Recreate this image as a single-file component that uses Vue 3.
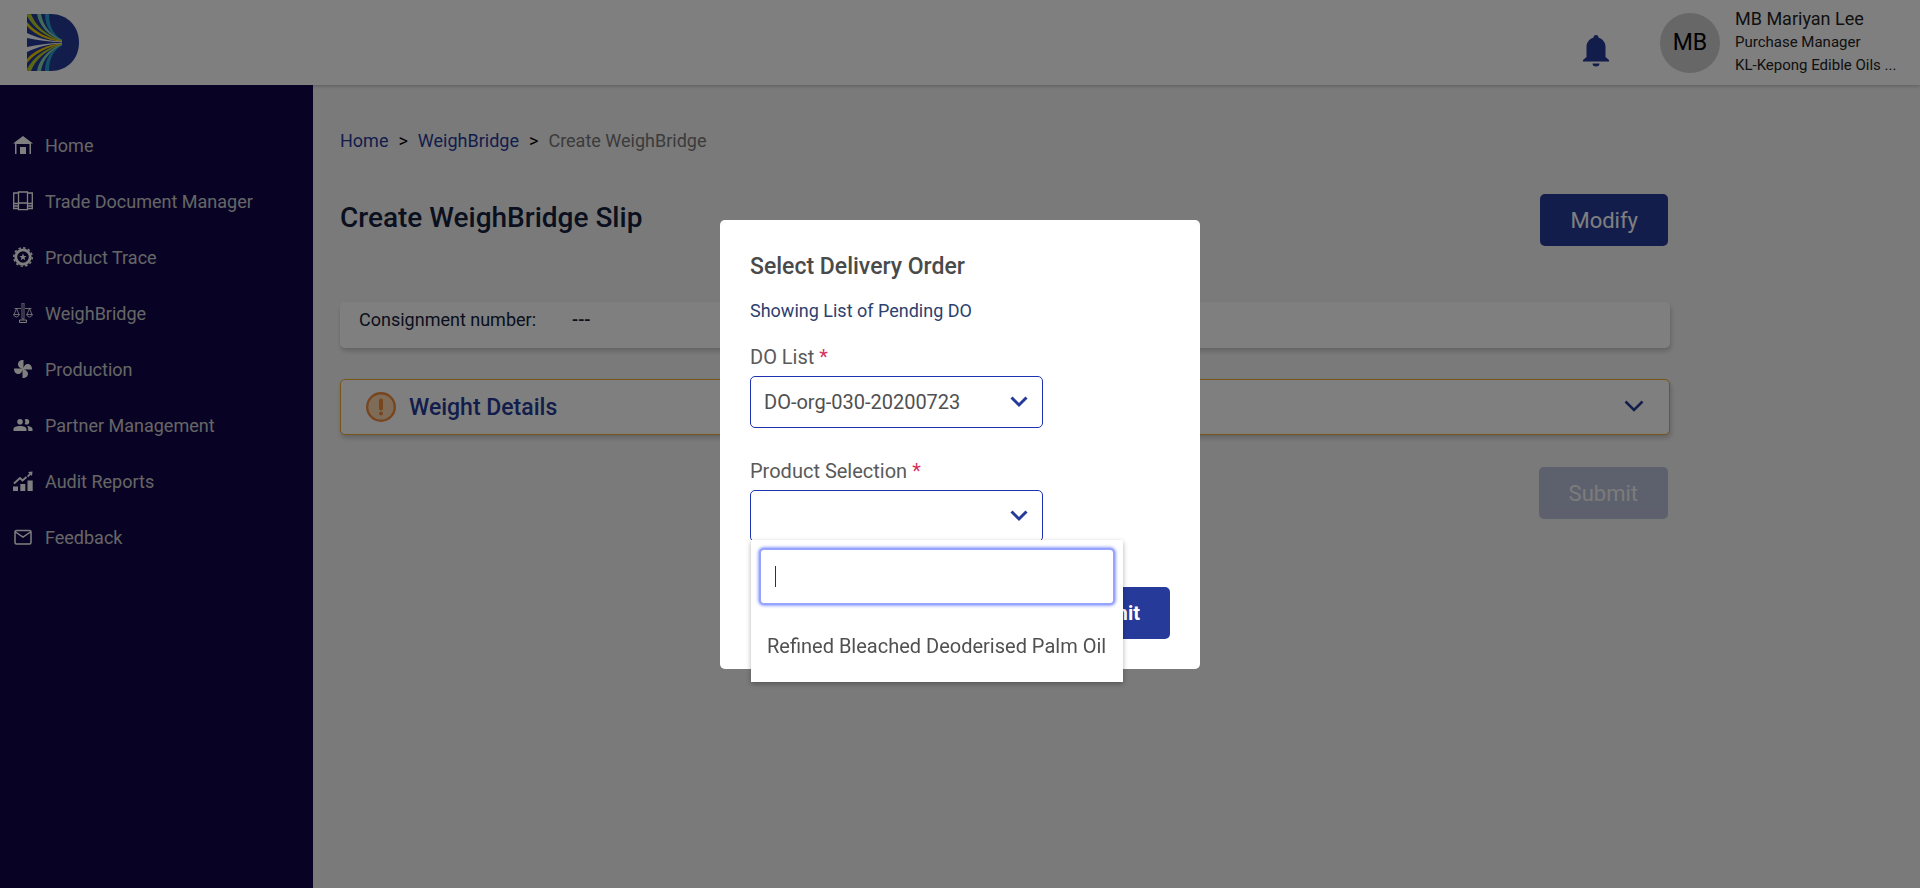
<script setup>
import { ref, onMounted } from 'vue'

const menu = [
  { label: 'Home', icon: 'home' },
  { label: 'Trade Document Manager', icon: 'docs' },
  { label: 'Product Trace', icon: 'trace' },
  { label: 'WeighBridge', icon: 'scale' },
  { label: 'Production', icon: 'fan' },
  { label: 'Partner Management', icon: 'people' },
  { label: 'Audit Reports', icon: 'chart' },
  { label: 'Feedback', icon: 'mail' }
]
const orders = ['DO-org-030-20200723']
const products = ['Refined Bleached Deoderised Palm Oil']
const order = ref(orders[0])
const product = ref('')
const query = ref('')
const search = ref(null)

onMounted(() => search.value.focus())
</script>

<template>
  <div class="page">
    <header class="topbar">
      <a href="#" class="logo" aria-label="Dashboard">
        <svg width="52" height="57" viewBox="0 0 52 57">
          <defs>
            <clipPath id="logo-shape"><path d="M2 0H24C40 0 52 12 52 28.500S40 57 24 57H2Q0 57 0 55V2Q0 0 2 0Z" /></clipPath>
          </defs>
          <g clip-path="url(#logo-shape)">
            <rect width="52" height="57" fill="#263a99" />
            <g v-for="side in [1, -1]" :key="side" :transform="side === 1 ? '' : 'translate(0 57) scale(1 -1)'">
              <path d="M18 0H22C22 14 28 22 35 25.500V27C25 22 18 13 18 0Z" fill="#28a0d0" />
              <path d="M10 0H14C16 12 24 21 35 26V27C22 22 12 12 10 0Z" fill="#86d6b4" />
              <path d="M0 0H4C8 11 20 22 35 26.500V27.500C18 23 6 13 0 2Z" fill="#b4cc2a" />
              <path d="M0 8C8 18 20 24 35 27V28C20 26 8 21 0 12Z" fill="#f2cf00" />
              <path d="M0 19C10 24 22 27 35 27.500V28.200C22 28 10 26 0 24Z" fill="#fff" />
            </g>
          </g>
        </svg>
      </a>
      <div class="account">
        <button class="bell" aria-label="Notifications">
          <svg width="26" height="32" viewBox="0 0 26 32" fill="#263a99">
            <path d="M13 0a2.500 2.500 0 0 1 2.500 2.500C20 4 22.500 7.500 22.500 12v10L26 25v1.500H0V25l3.500-3V12C3.500 7.500 6 4 10.500 2.500A2.500 2.500 0 0 1 13 0Z" />
            <path d="M9.500 28.500h7a3.500 3 0 0 1-7 0Z" />
          </svg>
        </button>
        <div class="avatar">MB</div>
        <div class="person">
          <span class="name">MB Mariyan Lee</span>
          <span class="detail">Purchase Manager</span>
          <span class="detail">KL-Kepong Edible Oils ...</span>
        </div>
      </div>
    </header>

    <div class="body">
      <nav class="sidebar" aria-label="Main">
        <a v-for="item in menu" :key="item.label" href="#" class="nav-item">
          <svg width="20" height="20" viewBox="0 0 20 20" fill="#fff">
            <path v-if="item.icon === 'home'" d="M10 1 20 8.500H18V19H16.500V9H3.500V19H2V8.500H0ZM7 12h6v7H7Z" />
            <g v-else-if="item.icon === 'docs'" fill="none" stroke="#fff" stroke-width="1.300">
              <path d="M5.500 2H.700V17.500H5.500M14.500 2H19.300V17.500H14.500M.700 12.500H5.500M14.500 12.500H19.300M.700 15H5.500M14.500 15H19.300M5.500 1H14.500V18.700H5.500ZM5.500 12H14.500" />
            </g>
            <g v-else-if="item.icon === 'trace'">
              <circle cx="10" cy="10" r="7.200" fill="none" stroke="#fff" stroke-width="2.800" />
              <circle cx="10" cy="10" r="9.200" fill="none" stroke="#fff" stroke-width="1.500" stroke-dasharray="2.500 2.300" />
              <path d="m10 6.500 1 2.500h2.600l-2.100 1.700.800 2.600-2.300-1.600-2.300 1.600.800-2.600L6.400 9H9Z" />
            </g>
            <g v-else-if="item.icon === 'scale'" fill="none" stroke="#fff" stroke-opacity=".8">
              <path d="M9 0H11V16H9ZM1.500 5.500H8M12 5.500H18.500M3.500 5.500 1 11.500M3.500 5.500 6 11.500M16.500 5.500 14 11.500M16.500 5.500 19 11.500M.500 11.500H6.500Q5.500 14 3.500 14T.500 11.500ZM13.500 11.500H19.500Q18.500 14 16.500 14T13.500 11.500Z" />
              <path d="M6.500 17H13.500V19.500H6.500Z" stroke-opacity="1" />
            </g>
            <g v-else-if="item.icon === 'fan'">
              <path v-for="turn in [0, 90, 180, 270]" :key="turn" d="M10.500 10.500V1C6.500 1 5 3 5 5.500C5 8 7.500 9 10.500 10.500Z" :transform="`rotate(${turn} 10 10)`" />
            </g>
            <path v-else-if="item.icon === 'people'" d="M7 4a2.800 2.800 0 1 1 0 5.600A2.800 2.800 0 0 1 7 4Zm6.500 0a2.800 2.800 0 1 1 0 5.600q-1 0-1.800-.600a4.500 4.500 0 0 0 0-4.400q.800-.600 1.800-.600ZM7 11c3.500 0 6.500 1.200 6.500 3V16H.500V14C.500 12.200 3.500 11 7 11Zm7 0c3 .200 5.500 1.200 5.500 3V16H15.200V14q0-1.800-1.200-3Z" />
            <g v-else-if="item.icon === 'chart'">
              <path d="M0 15.500H5V20H0ZM7.300 13H12.300V20H7.300ZM14.500 9.500H19.700V20H14.500ZM15 1l4.500-.500L19 5l-1.300-1.300-2.500 2.600-1.200-1.200 2.400-2.700Z" />
              <path d="M1 12.500 7 7 9.500 9.500 13.500 6" fill="none" stroke="#fff" stroke-width="1.800" />
            </g>
            <path v-else d="M3.500 3.500H16.500Q18 3.500 18 5V15.500Q18 17 16.500 17H3.500Q2 17 2 15.500V5Q2 3.500 3.500 3.500ZM2.500 5 10 10 17.500 5" fill="none" stroke="#fff" stroke-width="1.500" />
          </svg>
          <span>{{ item.label }}</span>
        </a>
      </nav>

      <main class="content">
        <nav class="crumbs" aria-label="Breadcrumb">
          <a href="#">Home</a>
          <span class="sep">&gt;</span>
          <a href="#">WeighBridge</a>
          <span class="sep">&gt;</span>
          <span class="current">Create WeighBridge</span>
        </nav>
        <div class="heading">
          <h1>Create WeighBridge Slip</h1>
          <button class="btn">Modify</button>
        </div>
        <section class="card consignment">
          <span>Consignment number:</span>
          <span class="value">---</span>
        </section>
        <section class="card weight">
          <svg width="30" height="30" viewBox="0 0 30 30">
            <circle cx="15" cy="15" r="13.800" fill="#ffd9b0" stroke="#f08c3c" stroke-width="2.400" />
            <path d="M15 8.500V16.500" stroke="#f08c3c" stroke-width="4" stroke-linecap="round" />
            <circle cx="15" cy="21.500" r="2" fill="#f08c3c" />
          </svg>
          <h2>Weight Details</h2>
          <button class="toggle" aria-label="Expand weight details">
            <svg width="20" height="12" viewBox="0 0 20 12"><path d="m1.500 1.500 8.500 8.500 8.500-8.500" fill="none" stroke="#263a99" stroke-width="2.500" /></svg>
          </button>
        </section>
        <div class="actions">
          <button class="btn" disabled>Submit</button>
        </div>
      </main>
    </div>

    <div class="overlay">
      <form class="modal" role="dialog" aria-labelledby="modal-title" @submit.prevent>
        <h2 id="modal-title">Select Delivery Order</h2>
        <p>Showing List of Pending DO</p>
        <div class="field">
          <label for="order">DO List <span>*</span></label>
          <div class="select">
            <select id="order" v-model="order">
              <option v-for="o in orders" :key="o">{{ o }}</option>
            </select>
            <svg width="18" height="12" viewBox="0 0 18 12"><path d="m1.500 1.500 7.500 7.500 7.500-7.500" fill="none" stroke="#263a99" stroke-width="3" /></svg>
          </div>
        </div>
        <div class="field">
          <label for="product">Product Selection <span>*</span></label>
          <div class="select">
            <select id="product" v-model="product">
              <option value=""></option>
              <option v-for="p in products" :key="p">{{ p }}</option>
            </select>
            <svg width="18" height="12" viewBox="0 0 18 12"><path d="m1.500 1.500 7.500 7.500 7.500-7.500" fill="none" stroke="#263a99" stroke-width="3" /></svg>
            <div class="menu">
              <div class="search">
                <input ref="search" v-model="query" type="text" aria-label="Search products" />
                <span v-if="!query" class="caret"></span>
              </div>
              <button v-for="p in products" :key="p" type="button" class="choice" @click="product = p">{{ p }}</button>
            </div>
          </div>
        </div>
        <button class="btn confirm" type="submit">Submit</button>
      </form>
    </div>
  </div>
</template>

<style>
body {
  margin: 0;
}
</style>

<style scoped>
* {
  box-sizing: border-box;
}
.page {
  min-height: 100vh;
  display: flex;
  flex-direction: column;
  background: #f5f5f5;
  font-family: Roboto, "Liberation Sans", sans-serif;
  color: #14213d;
}
a {
  text-decoration: none;
}
button,
input,
select {
  font-family: inherit;
}
h1,
h2,
p {
  margin: 0;
}
.topbar {
  height: 85px;
  padding: 0 26px 0 27px;
  display: flex;
  align-items: center;
  justify-content: space-between;
  background: #fff;
  box-shadow: 0 1px 4px rgba(0, 0, 0, 0.25);
}
.logo svg {
  display: block;
}
.account {
  display: flex;
  align-items: center;
  color: #000;
}
.bell {
  padding: 20px 0 0;
  border: 0;
  background: none;
  margin-right: 51px;
}
.avatar {
  width: 60px;
  height: 60px;
  margin-right: 15px;
  border-radius: 50%;
  background: #cecece;
  display: grid;
  place-items: center;
  font-size: 23px;
}
.person {
  width: 159px;
  padding-bottom: 2px;
  display: flex;
  flex-direction: column;
  line-height: 23px;
  white-space: nowrap;
  color: #222;
}
.name {
  margin-bottom: 1px;
  font-size: 18px;
}
.detail {
  font-size: 15px;
}
.body {
  flex: 1;
  display: flex;
}
.sidebar {
  width: 313px;
  padding-top: 32px;
  background: #10064a;
}
.nav-item {
  height: 56px;
  padding-left: 13px;
  display: flex;
  align-items: center;
  gap: 12px;
  color: #ccc;
  font-size: 18px;
}
.content {
  flex: 1;
  max-width: 1357px;
  padding: 44px 0 0 27px;
}
.crumbs {
  display: flex;
  gap: 10px;
  font-size: 18px;
  line-height: 24px;
}
.crumbs a {
  color: #263a99;
}
.sep {
  color: #000;
}
.current {
  color: #777;
}
.heading {
  display: flex;
  justify-content: space-between;
  align-items: flex-start;
  margin: 41px 2px 56px 0;
}
h1 {
  font-size: 28px;
  line-height: 48px;
  font-weight: 500;
}
.btn {
  height: 52px;
  padding: 0 30px;
  border: 0;
  border-radius: 5px;
  background: #263a99;
  color: #fff;
  font-size: 22px;
}
.btn:disabled {
  opacity: 0.28;
}
.card {
  background: #fff;
  border-radius: 5px;
  box-shadow: 1px 3px 5px rgba(0, 0, 0, 0.2);
}
.consignment {
  height: 46px;
  padding: 7px 19px;
  display: flex;
  gap: 36px;
  font-size: 18px;
}
.value {
  font-weight: 500;
}
.weight {
  height: 56px;
  margin: 31px 0 32px;
  padding: 0 25px;
  border: 1px solid #efa82f;
  display: flex;
  align-items: center;
  gap: 13px;
}
.weight h2 {
  color: #263a99;
  font-size: 23px;
  font-weight: 500;
}
.toggle {
  margin-left: auto;
  padding: 0;
  border: 0;
  background: none;
}
.actions {
  display: flex;
  justify-content: flex-end;
  padding-right: 2px;
}
.overlay {
  position: fixed;
  inset: 0;
  display: grid;
  place-items: center;
  background: rgba(0, 0, 0, 0.5);
}
.modal {
  width: 480px;
  padding: 31px 30px 30px;
  display: flex;
  flex-direction: column;
  border-radius: 5px;
  background: #fff;
}
.modal h2 {
  color: #4a4a4a;
  font-size: 23px;
  line-height: 32px;
  font-weight: 500;
}
.modal p {
  margin: 16px 0 21px;
  color: #2c416e;
  font-size: 18px;
  line-height: 24px;
}
.field {
  margin-bottom: 30px;
}
label {
  display: block;
  margin-bottom: 6px;
  color: #5a5a5a;
  font-size: 20px;
  line-height: 26px;
}
label span {
  color: #d6335f;
}
.select {
  width: 293px;
  position: relative;
}
.select > svg {
  position: absolute;
  top: 20px;
  right: 15px;
}
select {
  display: block;
  width: 100%;
  height: 52px;
  padding: 0 13px;
  appearance: none;
  border: 1px solid #1d33b0;
  border-radius: 5px;
  background: #fff;
  color: #505050;
  font-size: 20px;
}
.menu {
  position: absolute;
  top: 50px;
  left: 1px;
  padding: 10px 10px 0;
  background: #fff;
  box-shadow: 0 2px 5px rgba(0, 0, 0, 0.3);
}
.search {
  position: relative;
  margin-bottom: 7px;
}
.search input {
  display: block;
  width: 100%;
  height: 53px;
  padding: 0 14px;
  border: 0;
  border-radius: 3px;
  outline: 0;
  box-shadow: 0 0 0 2px #96a3ff, 0 0 3px 3px #96a3ff;
  caret-color: transparent;
  color: #333;
  font-size: 20px;
}
.caret {
  position: absolute;
  top: 16px;
  left: 14px;
  width: 1px;
  height: 21px;
  background: #333;
}
.choice {
  height: 72px;
  padding: 0 7px 0 6px;
  border: 0;
  background: none;
  color: #505050;
  font-size: 20px;
  white-space: nowrap;
}
.confirm {
  margin-top: 15px;
  align-self: flex-end;
  font-size: 20px;
  font-weight: 700;
}
</style>
